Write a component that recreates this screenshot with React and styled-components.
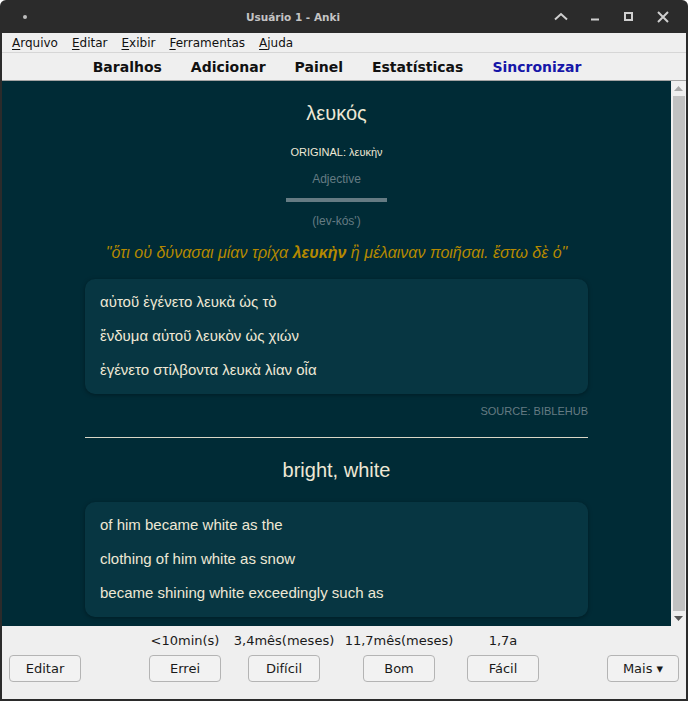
import styled, { createGlobalStyle } from "styled-components";

const GlobalStyle = createGlobalStyle`
  html, body {
    margin: 0;
    padding: 0;
    background: #ffffff;
  }
  * {
    box-sizing: border-box;
  }
`;

const Window = styled.div`
  width: 688px;
  height: 701px;
  display: flex;
  flex-direction: column;
  background: #2b2b2b;
  border-radius: 6px 6px 0 0;
  overflow: hidden;
  font-family: "DejaVu Sans", sans-serif;
`;

const TitleBar = styled.div`
  height: 33px;
  flex: none;
  display: flex;
  align-items: center;
  color: #c4c4c4;
`;

const TitleLeft = styled.div`
  width: 42px;
  padding-left: 23px;
  display: flex;
  align-items: center;
`;

const Dot = styled.span`
  width: 4px;
  height: 4px;
  border-radius: 50%;
  background: #bdbdbd;
`;

const Title = styled.div`
  flex: 1;
  text-align: center;
  font-size: 10.5px;
  font-weight: bold;
`;

const Controls = styled.div`
  display: flex;
  padding-right: 8px;
`;

const Control = styled.div`
  width: 34px;
  height: 33px;
  display: flex;
  align-items: center;
  justify-content: center;
`;

const Frame = styled.div`
  flex: 1;
  margin: 0 2px 2px;
  display: flex;
  flex-direction: column;
  background: #efefef;
  min-height: 0;
`;

const MenuBar = styled.div`
  height: 20px;
  flex: none;
  display: flex;
  align-items: center;
  padding-left: 3px;
  border-bottom: 1px solid #d6d6d6;
  font-size: 12px;
  color: #111;
`;

const MenuItem = styled.span`
  padding: 0 7px;
  u {
    text-decoration-thickness: 1px;
    text-underline-offset: 2px;
  }
`;

const Toolbar = styled.div`
  height: 28px;
  flex: none;
  display: flex;
  align-items: center;
  justify-content: center;
  gap: 29px;
  padding-right: 14px;
  border-bottom: 1px solid #a4a4a4;
  font-size: 14px;
  font-weight: bold;
`;

const ToolLink = styled.span`
  color: ${(p) => (p.$active ? "#1616a8" : "#111111")};
`;

const Viewport = styled.div`
  flex: 1;
  display: flex;
  min-height: 0;
`;

const Reviewer = styled.div`
  flex: 1;
  overflow: hidden;
  background: #002b36;
  color: #eee8d5;
  font-family: "Liberation Sans", Arial, sans-serif;
  padding-top: 20px;
`;

const Content = styled.div`
  width: 503px;
  margin: 0 auto;
  display: flex;
  flex-direction: column;
  align-items: center;
  text-align: center;
`;

const Headword = styled.div`
  font-size: 20px;
  line-height: 24px;
  margin-top: ${(p) => p.$top || 0}px;
`;

const Small = styled.div`
  font-size: ${(p) => p.$size || 12}px;
  line-height: 14px;
  margin-top: ${(p) => p.$top}px;
  color: ${(p) => (p.$muted ? "#657b83" : "#eee8d5")};
`;

const Bar = styled.div`
  width: 101px;
  height: 4px;
  margin-top: 12px;
  background: #657b83;
`;

const Quote = styled.div`
  margin-top: 15px;
  font-size: 16px;
  line-height: 20px;
  font-style: italic;
  color: #b58900;
  white-space: nowrap;
  b {
    font-weight: bold;
  }
`;

const Card = styled.div`
  align-self: stretch;
  margin-top: ${(p) => p.$top}px;
  padding: 14px 15px 15px;
  background: #073642;
  border-radius: 10px;
  box-shadow: 0 1px 4px rgba(0, 0, 0, 0.35);
  text-align: left;
  display: flex;
  flex-direction: column;
  gap: 16px;
`;

const Line = styled.div`
  font-size: 15px;
  line-height: 18px;
`;

const Source = styled.div`
  align-self: flex-end;
  margin-top: 10px;
  font-size: 11px;
  line-height: 14px;
  color: #657b83;
`;

const Rule = styled.div`
  align-self: stretch;
  height: 1px;
  margin-top: 19px;
  background: #d9d6c6;
`;

const Scrollbar = styled.div`
  width: 15px;
  flex: none;
  background: #efefef;
  display: flex;
  flex-direction: column;
  align-items: center;
`;

const Arrow = styled.div`
  height: 15px;
  flex: none;
  display: flex;
  align-items: center;
  justify-content: center;
`;

const Thumb = styled.div`
  flex: 1;
  width: 12px;
  margin-left: 1px;
  background: #c1c1c1;
`;

const BottomBar = styled.div`
  height: 73px;
  flex: none;
  display: flex;
  align-items: flex-end;
  padding: 0 7px 17px;
  font-size: 13px;
  color: #1a1a1a;
`;

const Button = styled.div`
  width: 72px;
  height: 27px;
  display: flex;
  align-items: center;
  justify-content: center;
  border: 1px solid #b4b4b4;
  border-radius: 4px;
  background: #f2f2f2;
`;

const Answers = styled.div`
  flex: 1;
  display: flex;
  justify-content: center;
  padding-left: 4px;
`;

const AnswerColumn = styled.div`
  width: ${(p) => p.$width}px;
  display: flex;
  flex-direction: column;
  align-items: center;
  gap: 6px;
`;

const Interval = styled.div`
  line-height: 17px;
  white-space: nowrap;
`;

const menus = ["Arquivo", "Editar", "Exibir", "Ferramentas", "Ajuda"];
const tools = ["Baralhos", "Adicionar", "Painel", "Estatísticas", "Sincronizar"];

const answers = [
  { label: "<10min(s)", text: "Errei", width: 84 },
  { label: "3,4mês(meses)", text: "Difícil", width: 114 },
  { label: "11,7mês(meses)", text: "Bom", width: 116 },
  { label: "1,7a", text: "Fácil", width: 92 },
];

function WindowControls() {
  const stroke = { stroke: "#cfcfcf", strokeWidth: 2, fill: "none" };
  return (
    <Controls>
      <Control>
        <svg width="14" height="10" viewBox="0 0 14 10">
          <path d="M1 7.5 L7 2 L13 7.5" {...stroke} />
        </svg>
      </Control>
      <Control>
        <svg width="10" height="10" viewBox="0 0 10 10">
          <path d="M1 7.5 H9" {...stroke} />
        </svg>
      </Control>
      <Control>
        <svg width="10" height="10" viewBox="0 0 10 10">
          <rect x="1" y="1" width="7" height="7" {...stroke} />
        </svg>
      </Control>
      <Control>
        <svg width="12" height="12" viewBox="0 0 12 12">
          <path d="M1 1 L11 11 M11 1 L1 11" {...stroke} />
        </svg>
      </Control>
    </Controls>
  );
}

export default function App() {
  return (
    <>
      <GlobalStyle />
      <Window>
        <TitleBar>
          <TitleLeft>
            <Dot />
          </TitleLeft>
          <Title>Usuário 1 - Anki</Title>
          <WindowControls />
        </TitleBar>
        <Frame>
          <MenuBar>
            {menus.map((m) => (
              <MenuItem key={m}>
                <u>{m[0]}</u>
                {m.slice(1)}
              </MenuItem>
            ))}
          </MenuBar>
          <Toolbar>
            {tools.map((t) => (
              <ToolLink key={t} $active={t === "Sincronizar"}>
                {t}
              </ToolLink>
            ))}
          </Toolbar>
          <Viewport>
            <Reviewer>
              <Content>
                <Headword>λευκός</Headword>
                <Small $size={11} $top={20}>
                  ORIGINAL: λευκὴν
                </Small>
                <Small $muted $top={13}>
                  Adjective
                </Small>
                <Bar />
                <Small $muted $top={12}>
                  (lev-kós')
                </Small>
                <Quote>
                  "ὅτι οὐ δύνασαι μίαν τρίχα <b>λευκὴν</b> ἢ μέλαιναν ποιῆσαι. ἔστω δὲ ὁ"
                </Quote>
                <Card $top={16}>
                  <Line>αὐτοῦ ἐγένετο λευκὰ ὡς τὸ</Line>
                  <Line>ἔνδυμα αὐτοῦ λευκὸν ὡς χιών</Line>
                  <Line>ἐγένετο στίλβοντα λευκὰ λίαν οἷα</Line>
                </Card>
                <Source>SOURCE: BIBLEHUB</Source>
                <Rule />
                <Headword $top={20}>bright, white</Headword>
                <Card $top={20}>
                  <Line>of him became white as the</Line>
                  <Line>clothing of him white as snow</Line>
                  <Line>became shining white exceedingly such as</Line>
                </Card>
              </Content>
            </Reviewer>
            <Scrollbar>
              <Arrow>
                <svg width="9" height="5" viewBox="0 0 9 5">
                  <path d="M0 5 L4.5 0 L9 5 Z" fill="#a8a8a8" />
                </svg>
              </Arrow>
              <Thumb />
              <Arrow>
                <svg width="9" height="5" viewBox="0 0 9 5">
                  <path d="M0 0 L4.5 5 L9 0 Z" fill="#555555" />
                </svg>
              </Arrow>
            </Scrollbar>
          </Viewport>
          <BottomBar>
            <Button>Editar</Button>
            <Answers>
              {answers.map((a) => (
                <AnswerColumn key={a.text} $width={a.width}>
                  <Interval>{a.label}</Interval>
                  <Button>{a.text}</Button>
                </AnswerColumn>
              ))}
            </Answers>
            <Button>Mais ▾</Button>
          </BottomBar>
        </Frame>
      </Window>
    </>
  );
}
